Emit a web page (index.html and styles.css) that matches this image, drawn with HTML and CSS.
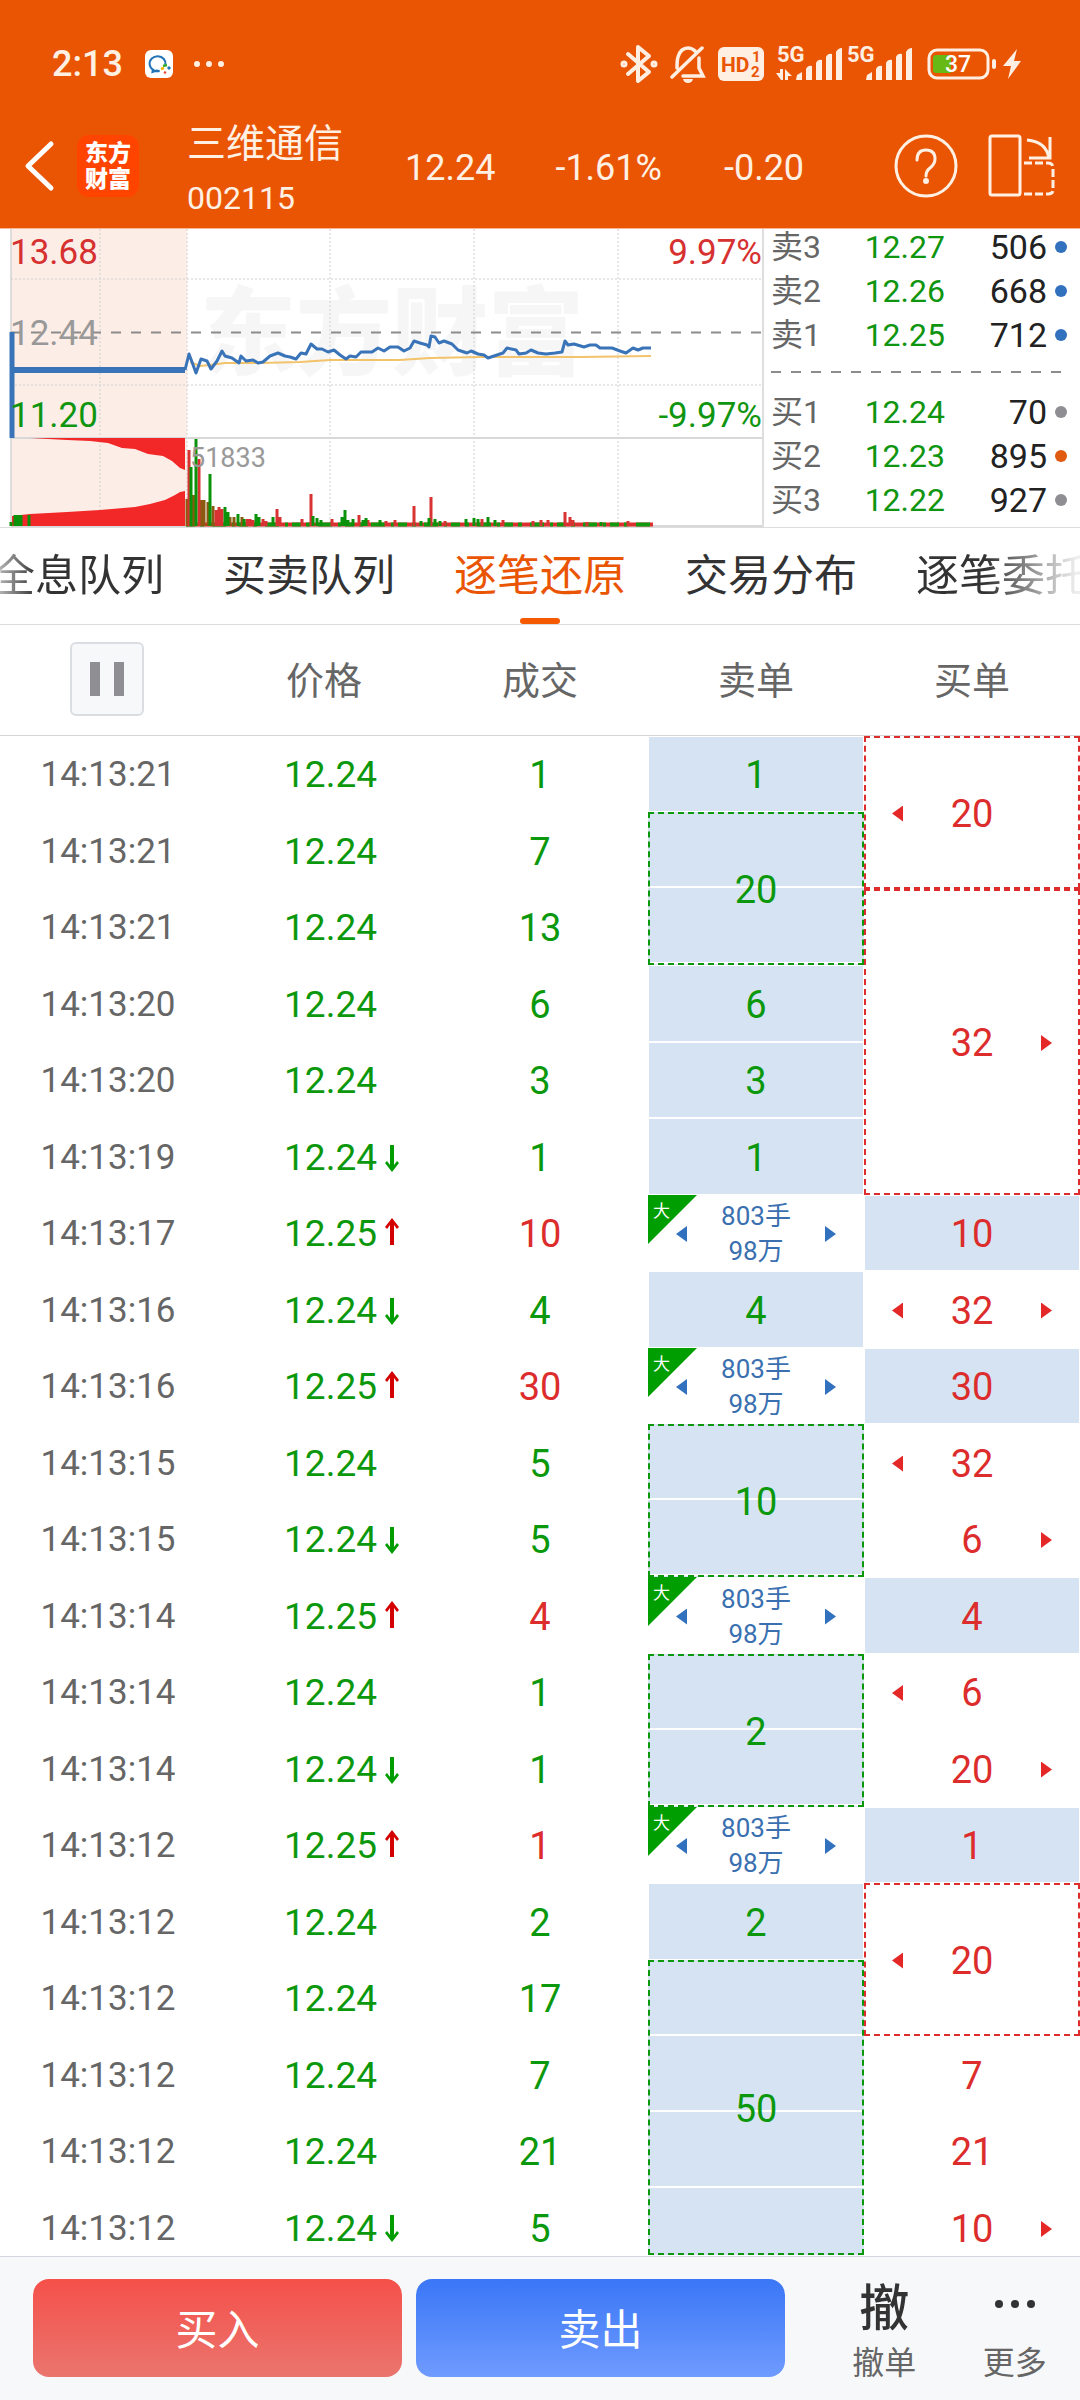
FILE: index.html
```html
<!DOCTYPE html>
<html lang="zh-CN">
<head>
<meta charset="utf-8">
<meta name="viewport" content="width=device-width, initial-scale=1">
<title>三维通信 002115</title>
<link rel="stylesheet" href="styles.css">
</head>
<body>
<header class="top">
  <div class="status">
    <span class="clock">2:13</span>
    <svg class="app" width="28" height="28" viewBox="0 0 28 28"><rect width="28" height="28" rx="6" fill="#fff"/><path d="M20.500 15a8 7.500 0 1 0-6 6l-3-.5-4 1.500.5-3.500" fill="none" stroke="#2273b8" stroke-width="2"/><path d="M18 16l4-1" stroke="#3a3" stroke-width="2.500"/><path d="M23 17l2 2" stroke="#2273b8" stroke-width="3"/><path d="M16 19l3-1" stroke="#f5b400" stroke-width="2.500"/><path d="M19 22l2 1" stroke="#e43" stroke-width="2.500"/></svg>
    <svg width="32" height="8" viewBox="0 0 32 8" fill="#ffeee2"><circle cx="4" cy="4" r="3"/><circle cx="16" cy="4" r="3"/><circle cx="28" cy="4" r="3"/></svg>
    <div class="signals">
      <svg width="38" height="40" viewBox="0 0 38 40" fill="none" stroke="#ffeee2" stroke-width="4" stroke-linejoin="round" stroke-linecap="round"><path d="M8 10l21 18-11 9V3l11 9L8 30"/><circle cx="4" cy="20" r="1.500"/><circle cx="34" cy="20" r="1.500"/></svg>
      <svg width="36" height="40" viewBox="0 0 36 40" fill="none" stroke="#ffeee2" stroke-width="3.500" stroke-linecap="round"><path d="M2 33L32 4M7 24c0-4 0-8 1-11C10 6 14 4 18 4c3 0 5 1 7 3M13 32h20l-4-8V14"/><path d="M13 35h10q-1 4-5 4t-5-4z" fill="#ffeee2" stroke="none"/></svg>
      <svg width="46" height="34" viewBox="0 0 46 34"><rect width="46" height="34" rx="6" fill="#ffeee2"/><g fill="#ea5504" font-weight="700"><text x="3" y="25" font-size="21">HD</text><text x="34" y="15" font-size="15">1</text><text x="33" y="30" font-size="15">2</text></g></svg>
      <svg width="68" height="44" viewBox="0 -4 68 44" fill="#ffeee2"><text x="1" y="16" font-size="22" font-weight="700">5G</text><path d="M0 27h4v-4h3v11H5zM9 23l7 7h-4v4H9zM20 34l1-5 5-3v8zM30 34V23q2-4 6-3v14zM40 34V17q2-4 6-3v20zM50 34V11q2-4 6-3v26zM60 34V6q2-4 6-4v32z"/></svg>
      <svg width="68" height="44" viewBox="0 -4 68 44" fill="#ffeee2"><text x="1" y="16" font-size="22" font-weight="700">5G</text><path d="M20 34l1-5 5-3v8zM30 34V23q2-4 6-3v14zM40 34V17q2-4 6-3v20zM50 34V11q2-4 6-3v26zM60 34V6q2-4 6-4v32z"/></svg>
      <svg width="96" height="32" viewBox="0 0 96 32"><rect x="3" y="2" width="59" height="28" rx="8" fill="none" stroke="#ffeee2" stroke-width="3"/><path d="M10 7h15v18H10q-3 0-3-3V10q0-3 3-3z" fill="#67b916"/><rect x="66" y="11" width="4" height="10" rx="2" fill="#ffeee2"/><text x="19" y="24" font-size="23" font-weight="500" fill="#fff">37</text><path d="M91 1L77 18h8l-3 13 13-18h-7z" fill="#ffeee2"/></svg>
    </div>
  </div>
  <div class="title">
    <button class="icon-btn back" aria-label="返回"><svg width="32" height="52" viewBox="0 0 32 52" fill="none" stroke="#fff" stroke-width="5" stroke-linecap="round" stroke-linejoin="round"><path d="M27 4L4 26l23 22"/></svg></button>
    <div class="brand"><span>东方</span><span>财富</span></div>
    <div class="stock"><h1>三维通信</h1><span>002115</span></div>
    <span class="quote q1">12.24</span><span class="quote q2">-1.61%</span><span class="quote q3">-0.20</span>
    <button class="icon-btn" aria-label="帮助"><svg width="64" height="66" viewBox="0 0 64 66" fill="none" stroke="#fff0e4" stroke-width="3" stroke-linecap="round"><circle cx="32" cy="33" r="30"/><path d="M23 27q0-10 9-10t9 9q0 5-5 9-4 3-4 8"/><circle cx="32" cy="48" r="1.500" fill="#fff"/></svg></button>
    <button class="icon-btn rotate" aria-label="横屏"><svg width="68" height="64" viewBox="0 0 68 64" fill="none" stroke="#fff0e4" stroke-width="3"><rect x="2" y="2" width="30" height="59" rx="2"/><path d="M39 6q20 2 22 19M41 24h21V3"/><path d="M36 29h24q5 0 5 5v22q0 4-5 4H36" stroke-dasharray="8 3"/></svg></button>
  </div>
</header>

<section class="market">
  <svg class="chart" viewBox="0 0 764 298" role="img" aria-label="分时走势">
    <text x="200" y="138" font-size="96" font-weight="900" fill="#f6f6f6">东方财富</text>
    <rect x="11" width="176" height="298" fill="#fdede7"/>
    <path d="M11 50H762M11 156H762M100 0V297M187 0V297M330 0V297M474 0V297M618 0V297" stroke="#d0d0d0" stroke-dasharray="2 2" fill="none"/>
    <path d="M11 0V297M763 0V298" stroke="#d4d4d4" stroke-width="1.500"/>
    <path d="M11 209H762M11 297H762" stroke="#d8d8d8" stroke-width="2"/>
    <path d="M11 103.500H762" stroke="#8c8c8c" stroke-width="2" stroke-dasharray="10 10"/>
    <path d="M30 209L67 211 90 212 108 214 122 219 135 220 148 225 163 227 172 232 180 239 185 241V209zM12 297V287L30 285 67 283 100 281 135 278 150 275 165 271 175 266 180 263 185 262V297z" fill="#f22727"/>
    <path d="M186 295.500H653" stroke="#dc3030" stroke-width="4"/>
    <path d="M186 295.500H653" stroke="#109a10" stroke-width="4" stroke-dasharray="9 5 4 8 14 6 3 4"/>
    <path d="M187 297V270M193.500 297V266M201 297V271M204 297V271M208 297V273M213 297V277M230 297V288M234 297V288M242 297V288" stroke="#8a5a10" stroke-width="3" fill="none"/>
    <path d="M189 297V221M199 297V230M216 297V281M219 297V278M222 297V280M247 297V290M250 297V290M253 297V291M263 297V290M266 297V292M277 297V280M280 297V288M302 297V290M311 297V265M332 297V290M359 297V286M368 297V291M386 297V292M395 297V291M414 297V277M431 297V268M445 297V292M482 297V290M503 297V291M533 297V292M541 297V291M548 297V291M565 297V283M570 297V288M573 297V291M587 297V293M628 297V292" stroke="#d83232" stroke-width="3" fill="none"/>
    <path d="M11 297V293M15 297V286M18 297V286M21 297V286M29 297V286M191 297V238M196 297V210M210 297V245M225 297V278M228 297V283M238 297V285M244 297V290M256 297V285M259 297V288M273 297V288M313 297V287M317 297V289M321 297V291M345 297V281M342 297V288M348 297V291M353 297V290M363 297V291M366 297V289M380 297V291M421 297V292M429 297V289M435 297V290M440 297V292M466 297V290M474 297V289M478 297V290M488 297V288M495 297V291M601 297V293" stroke="#0a920a" stroke-width="3" fill="none"/>
    <polyline points="190,133 200,137 210,136 225,134 260,134 300,133 330,131 400,131 430,129 480,128 580,128 651,127" fill="none" stroke="#f3c36b" stroke-width="2"/>
    <path d="M12 103V209" stroke="#3a74b8" stroke-width="5"/><path d="M12 141H185" stroke="#3a74b8" stroke-width="6"/>
    <polyline points="185,141 189,125 192,133 196,144 201,130 207,132 211,140 217,132 222,122 225,127 232,129 239,134 241,127 246,132 253,131 258,134 263,133 270,127 278,124 285,127 290,128 296,130 301,124 306,125 311,115 317,120 322,120 328,123 334,121 340,126 346,130 350,127 356,128 361,123 372,123 378,119 384,122 390,118 398,118 404,122 410,119 414,112 420,114 427,116 429,118 431,107 435,108 439,114 444,112 452,115 458,121 467,124 471,122 478,125 484,126 488,129 497,126 503,124 507,119 516,121 519,125 526,124 531,121 538,124 546,125 555,124 562,123 565,112 568,116 574,115 584,118 590,116 596,116 600,119 612,119 620,122 626,124 633,119 638,121 643,119 651,119" fill="none" stroke="#3a74b8" stroke-width="3" stroke-linejoin="round"/>
    <g font-size="35"><text x="10" y="35" fill="#d63030">13.68</text><text x="10" y="116" fill="#999">12.44</text><text x="10" y="198" fill="#109510">11.20</text><text x="762" y="35" fill="#d63030" text-anchor="end">9.97%</text><text x="762" y="198" fill="#109510" text-anchor="end">-9.97%</text></g>
    <text x="190" y="238" font-size="27" fill="#999">51833</text>
  </svg>
  <div class="book">
    <ul>
      <li><span>卖3</span><b>12.27</b><em>506</em><i class="dot blue"></i></li>
      <li><span>卖2</span><b>12.26</b><em>668</em><i class="dot blue"></i></li>
      <li><span>卖1</span><b>12.25</b><em>712</em><i class="dot blue"></i></li>
    </ul>
    <div class="divider"></div>
    <ul>
      <li><span>买1</span><b>12.24</b><em>70</em><i class="dot"></i></li>
      <li><span>买2</span><b>12.23</b><em>895</em><i class="dot orange"></i></li>
      <li><span>买3</span><b>12.22</b><em>927</em><i class="dot"></i></li>
    </ul>
  </div>
</section>

<nav class="tabs">
  <button>全息队列</button><button>买卖队列</button><button class="active">逐笔还原</button><button>交易分布</button><button>逐笔委托</button>
</nav>

<main>
<table class="ticks">
  <thead><tr><th><button class="pause" aria-label="暂停"><i></i><i></i></button></th><th>价格</th><th>成交</th><th>卖单</th><th>买单</th></tr></thead>
  <tbody>
    <tr><td>14:13:21</td><td class="price">12.24</td><td class="g">1</td><td class="g fill">1</td><td class="r box" rowspan="2"><div class="order"><i class="prev"></i>20<i></i></div></td></tr>
    <tr><td>14:13:21</td><td class="price">12.24</td><td class="g">7</td><td class="g box span" rowspan="2">20</td></tr>
    <tr><td>14:13:21</td><td class="price">12.24</td><td class="g">13</td><td class="r box" rowspan="4"><div class="order"><i></i>32<i class="next"></i></div></td></tr>
    <tr><td>14:13:20</td><td class="price">12.24</td><td class="g">6</td><td class="g fill">6</td></tr>
    <tr><td>14:13:20</td><td class="price">12.24</td><td class="g">3</td><td class="g fill">3</td></tr>
    <tr><td>14:13:19</td><td class="price down">12.24</td><td class="g">1</td><td class="g fill">1</td></tr>
    <tr><td>14:13:17</td><td class="price up">12.25</td><td class="r">10</td><td class="big"><span class="tag">大</span><div class="order"><i class="prev"></i><span>803手<br>98万</span><i class="next"></i></div></td><td class="r fill">10</td></tr>
    <tr><td>14:13:16</td><td class="price down">12.24</td><td class="g">4</td><td class="g fill">4</td><td class="r"><div class="order"><i class="prev"></i>32<i class="next"></i></div></td></tr>
    <tr><td>14:13:16</td><td class="price up">12.25</td><td class="r">30</td><td class="big"><span class="tag">大</span><div class="order"><i class="prev"></i><span>803手<br>98万</span><i class="next"></i></div></td><td class="r fill">30</td></tr>
    <tr><td>14:13:15</td><td class="price">12.24</td><td class="g">5</td><td class="g box span" rowspan="2">10</td><td class="r"><div class="order"><i class="prev"></i>32<i></i></div></td></tr>
    <tr><td>14:13:15</td><td class="price down">12.24</td><td class="g">5</td><td class="r"><div class="order"><i></i>6<i class="next"></i></div></td></tr>
    <tr><td>14:13:14</td><td class="price up">12.25</td><td class="r">4</td><td class="big"><span class="tag">大</span><div class="order"><i class="prev"></i><span>803手<br>98万</span><i class="next"></i></div></td><td class="r fill">4</td></tr>
    <tr><td>14:13:14</td><td class="price">12.24</td><td class="g">1</td><td class="g box span" rowspan="2">2</td><td class="r"><div class="order"><i class="prev"></i>6<i></i></div></td></tr>
    <tr><td>14:13:14</td><td class="price down">12.24</td><td class="g">1</td><td class="r"><div class="order"><i></i>20<i class="next"></i></div></td></tr>
    <tr><td>14:13:12</td><td class="price up">12.25</td><td class="r">1</td><td class="big"><span class="tag">大</span><div class="order"><i class="prev"></i><span>803手<br>98万</span><i class="next"></i></div></td><td class="r fill">1</td></tr>
    <tr><td>14:13:12</td><td class="price">12.24</td><td class="g">2</td><td class="g fill">2</td><td class="r box" rowspan="2"><div class="order"><i class="prev"></i>20<i></i></div></td></tr>
    <tr><td>14:13:12</td><td class="price">12.24</td><td class="g">17</td><td class="g box span" rowspan="4">50</td></tr>
    <tr><td>14:13:12</td><td class="price">12.24</td><td class="g">7</td><td class="r">7</td></tr>
    <tr><td>14:13:12</td><td class="price">12.24</td><td class="g">21</td><td class="r">21</td></tr>
    <tr class="last"><td>14:13:12</td><td class="price down">12.24</td><td class="g">5</td><td class="r"><div class="order"><i></i>10<i class="next"></i></div></td></tr>
  </tbody>
</table>
</main>

<footer class="actions">
  <button class="trade buy">买入</button>
  <button class="trade sell">卖出</button>
  <div class="tools">
    <button><strong>撤</strong><span>撤单</span></button>
    <button><strong><svg width="44" height="10" viewBox="0 0 44 10" fill="#333"><circle cx="6" cy="5" r="4"/><circle cx="22" cy="5" r="4"/><circle cx="38" cy="5" r="4"/></svg></strong><span>更多</span></button>
  </div>
</footer>
</body>
</html>
```
FILE: styles.css
```css
* { box-sizing: border-box; }
body {
  margin: 0;
  min-height: 100vh;
  display: flex;
  flex-direction: column;
  background: #fff;
  color: #666;
  font-family: Roboto, "Noto Sans CJK SC", sans-serif;
  font-size: 38px;
}
button {
  margin: 0;
  padding: 0;
  border: 0;
  background: none;
  color: inherit;
  font: inherit;
}
svg { display: block; flex: none; }

/* header */
.top { background: #ea5504; color: #fff0e4; border-bottom: 1px solid #f7b795; }
.status {
  display: flex;
  align-items: center;
  height: 104px;
  padding: 24px 58px 0 52px;
}
.clock { font-size: 36px; font-weight: 500; width: 93px; }
.app { margin-right: 20px; }
.signals { display: flex; align-items: center; gap: 12px; margin-left: auto; }
.signals svg:nth-child(5) { margin-left: -10px; }
.title {
  display: flex;
  align-items: center;
  height: 124px;
  padding: 0 24px;
}
.back { width: 53px; }
.brand {
  width: 62px;
  height: 62px;
  padding-top: 6px;
  border-radius: 12px;
  background: #ff4400;
  color: #fff;
  font-size: 23px;
  font-weight: 900;
  line-height: 26px;
  text-align: center;
}
.brand span { display: block; }
.stock { margin-left: 48px; padding-top: 10px; }
.stock h1 { margin: 0; font-size: 39px; font-weight: 400; line-height: 54px; }
.stock span { display: block; font-size: 32px; line-height: 54px; }
.quote { padding-top: 4px; font-size: 36px; white-space: nowrap; }
.q1 { margin-left: 62px; }
.q2 { margin-left: 60px; }
.q3 { margin-left: 62px; }
.icon-btn { flex: none; }
.quote + .icon-btn { margin-left: auto; }
.rotate { margin-left: 30px; }

/* market overview */
.market {
  display: grid;
  grid-template-columns: 764fr 316fr;
  border-bottom: 1px solid #ddd;
}
.chart { width: 100%; height: auto; }
.book { padding: 0 13px 0 7px; font-size: 32px; }
.book ul {
  display: grid;
  gap: 8px;
  margin: 0;
  padding: 0;
  list-style: none;
}
.book li {
  display: grid;
  grid-template-columns: 64px 110px 102px 1fr;
  align-items: center;
  line-height: 36px;
}
.book span { font-size: 32px; }
.book b { color: #109510; font-weight: 400; text-align: right; }
.book em { color: #222; font-size: 34px; font-style: normal; text-align: right; }
.dot { justify-self: end; width: 12px; height: 12px; border-radius: 50%; background: #8e8e93; }
.dot.blue { background: #3271bd; }
.dot.orange { background: #e05a10; }
.divider {
  height: 2px;
  margin: 18px 0 21px;
  background: repeating-linear-gradient(90deg, #8c8c8c 0 10px, transparent 10px 20px);
}

/* tabs */
.tabs {
  display: flex;
  justify-content: center;
  gap: 59px;
  overflow: hidden;
  border-bottom: 1px solid #ddd;
  color: #333;
  font-size: 43px;
}
.tabs button {
  flex: none;
  height: 96px;
  line-height: 92px;
  white-space: nowrap;
}
.tabs .active {
  position: relative;
  color: #ea5504;
}
.tabs .active::after {
  content: "";
  position: absolute;
  left: 50%;
  bottom: 0;
  width: 40px;
  height: 6px;
  margin-left: -20px;
  border-radius: 3px;
  background: #f55a00;
}
.tabs button:first-child { background: linear-gradient(90deg, #ccc, #333 44px); background-clip: text; color: transparent; }
.tabs button:last-child { background: linear-gradient(90deg, #333 70px, #eee 160px); background-clip: text; color: transparent; }

/* tick table */
.ticks {
  width: 100%;
  table-layout: fixed;
  border-spacing: 0;
  text-align: center;
}
.ticks th {
  height: 111px;
  padding: 0 0 6px;
  border-bottom: 1px solid #d5d5d5;
  font-size: 38px;
  font-weight: 400;
}
.ticks th:first-child { padding: 0 2px 2px 0; }
.ticks td { position: relative; height: 76px; padding: 2px 0 0; line-height: 52px; }
.ticks tr:nth-child(even) td { height: 77px; }
.ticks td:first-child { font-size: 35px; }
.pause {
  display: flex;
  justify-content: center;
  align-items: center;
  gap: 14px;
  width: 74px;
  height: 74px;
  margin: 0 auto;
  border: 2px solid #dadde1;
  border-radius: 6px;
  background: #f7f8fa;
}
.pause i { width: 10px; height: 34px; background: #8e8e93; }
.g, .price { color: #0c980c; }
.r { color: #dc2c2c; }
.ticks .price { padding-right: 55px; font-size: 37px; text-align: right; }
.up::after, .down::after {
  content: "";
  position: absolute;
  right: 33px;
  bottom: 23px;
  width: 14px;
  height: 27px;
  background: #009c00;
  clip-path: polygon(5px 0, 9px 0, 9px 20px, 12px 16px, 14px 18px, 7px 27px, 0 18px, 2px 16px, 5px 20px);
}
.up::after { background: #d40000; transform: rotate(180deg); bottom: 26px; }
.last .down::after { bottom: 13px; }
.fill { background: #d6e3f2; border: 1px solid #fff; }
.box { border: 2px dashed; }
.span { background: linear-gradient(#d6e3f2 74px, #fff 0) 0 0 / 100% 76px border-box; }
.ticks .last td:nth-child(n) { height: 66px; padding-top: 0; vertical-align: bottom; }
.order { display: flex; justify-content: space-between; align-items: center; padding: 0 28px; }
.box .order { padding: 0 26px; }
.order i { width: 11px; height: 16px; }
.order .prev { background: #e42828; clip-path: polygon(100% 0, 100% 100%, 0 50%); }
.order .next { background: #e42828; clip-path: polygon(0 0, 0 100%, 100% 50%); }
.big { color: #3a70b0; }
.ticks .big { font-size: 26px; line-height: 35px; }
.big .order .prev, .big .order .next { background: #3271bd; }
.tag {
  position: absolute;
  left: 0;
  top: 0;
  width: 49px;
  height: 49px;
  padding-left: 5px;
  background: #009e00;
  clip-path: polygon(0 0, 100% 0, 0 100%);
  color: #fff;
  font-size: 17px;
  line-height: 32px;
  text-align: left;
}

/* bottom actions */
.actions {
  display: grid;
  grid-template-columns: 369fr 369fr 281fr;
  column-gap: 14px;
  align-items: start;
  margin-top: auto;
  height: 144px;
  padding: 22px 0 0 33px;
  border-top: 1px solid #d3d8e0;
  background: #f7f8fa;
}
.trade {
  height: 98px;
  padding-bottom: 4px;
  border-radius: 16px;
  color: #fff;
  font-size: 42px;
}
.buy { background: linear-gradient(#f5504a, #ea756e); }
.sell { background: linear-gradient(#3a76f6, #6f9bff); }
.tools {
  display: grid;
  grid-template-columns: 1fr 1fr;
  padding-left: 20px;
  font-size: 32px;
}
.tools strong {
  display: flex;
  justify-content: center;
  align-items: center;
  height: 50px;
  color: #333;
  font-size: 50px;
  font-weight: 500;
}
.tools span { display: block; margin-top: 12px; line-height: 44px; }
```
